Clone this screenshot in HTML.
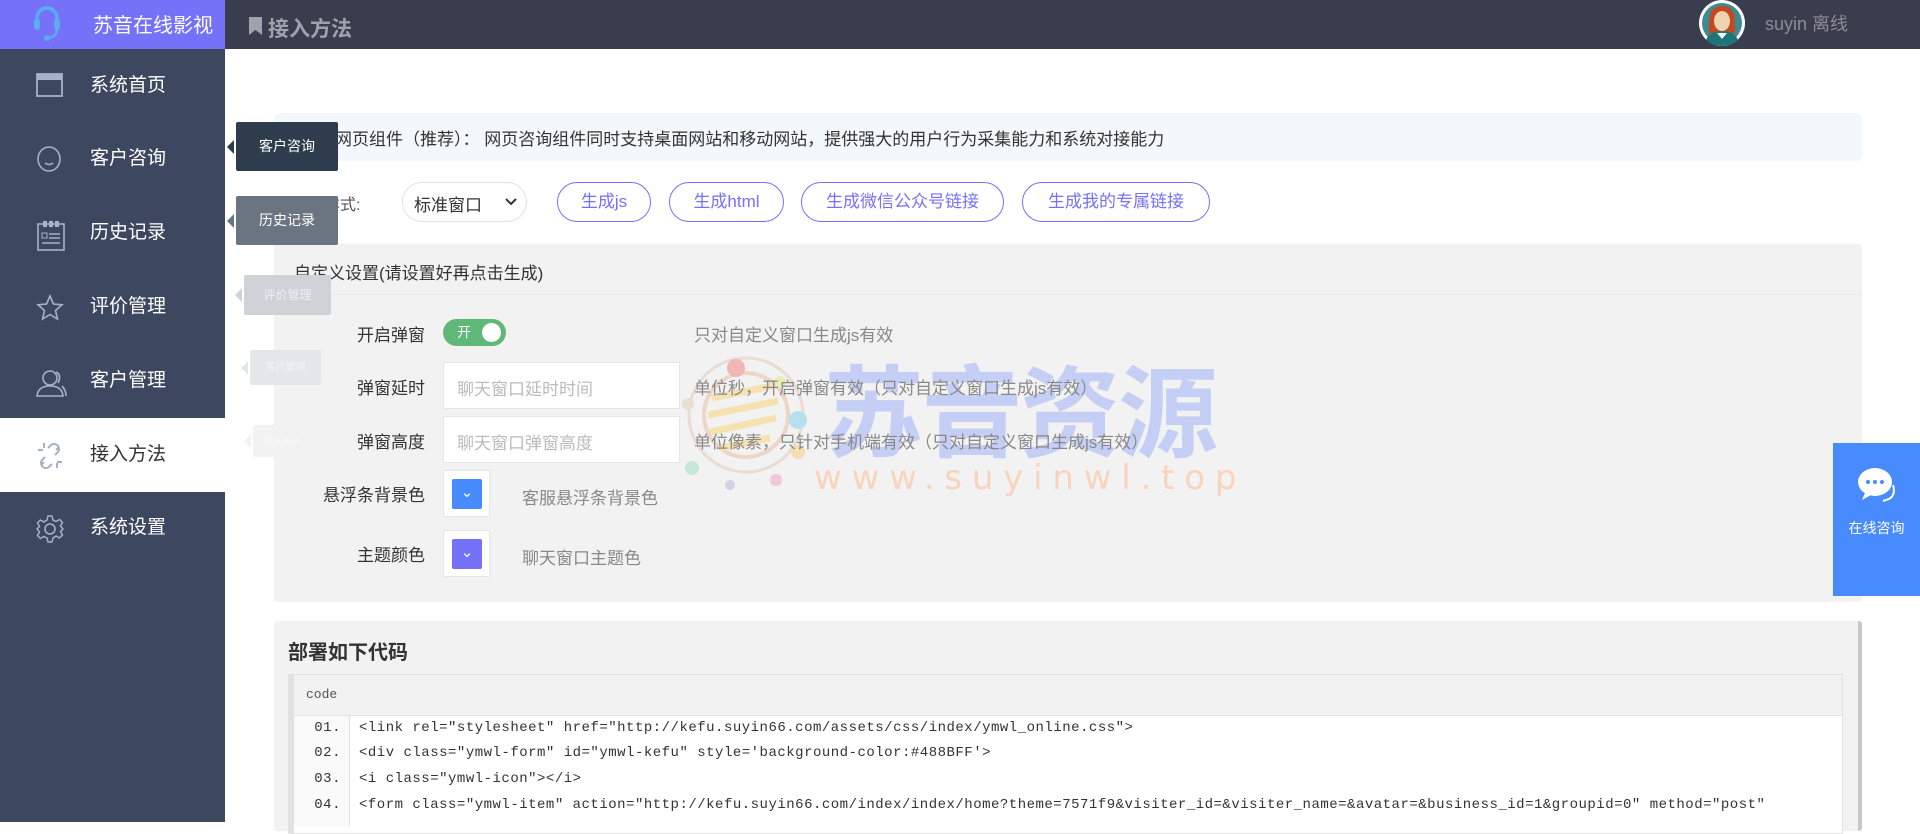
<!DOCTYPE html>
<html><head><meta charset="utf-8"><style>
*{margin:0;padding:0;box-sizing:border-box}
body{width:1920px;height:822px;overflow:hidden;background:#fff;font-family:"Liberation Sans","Noto Sans CJK SC",sans-serif;position:relative;color:#333}
.abs{position:absolute}
.top{left:0;top:0;width:1920px;height:49px;background:#393d4d}
.logo{left:0;top:0;width:225px;height:49px;background:#7571f9;color:#fff;font-size:20px}
.side{left:0;top:49px;width:225px;height:773px;background:#3d4760}
.mi{position:absolute;left:0;width:225px;height:74px;color:#fff;font-size:19px;line-height:74px;padding-left:90px}
.mi svg{position:absolute;left:36px;top:24px}
.mi.act{background:#fff;color:#333}
.tip{position:absolute;color:#fff;text-align:center;border-radius:2px}
.tip:before{content:"";position:absolute;left:-9px;top:50%;margin-top:-7px;border:7px solid transparent;border-right-color:inherit;border-left:0;width:0;height:0}
.lbl{position:absolute;font-size:17px;color:#333;text-align:right;width:200px}
.hint{position:absolute;font-size:17px;color:#888}
.inp{position:absolute;left:443px;width:237px;height:47px;background:#fff;border:1px solid #e6e6e6;font-size:17px;color:#bbb;padding:12px 13px}
.btn{position:absolute;top:182px;height:40px;border:1px solid #7571f9;border-radius:20px;color:#7571f9;font-size:17px;line-height:38px;text-align:center}
.cb{position:absolute;left:443px;width:47px;height:47px;border:1px solid #e6e6e6;background:#fff}
.cb div{position:absolute;left:8px;top:8px;width:30px;height:30px;border-radius:2px;color:#fff;text-align:center;line-height:28px;font-size:15px}
.code{font-family:"Liberation Mono",monospace;font-size:14px;letter-spacing:0.5px;color:#333}
.ln{position:absolute;left:0;width:62px;text-align:right;padding-right:9px}
</style></head><body>
<div class="abs top"></div>
<div class="abs logo">
<svg class="abs" style="left:33px;top:4px" width="28" height="38" viewBox="0 0 28 38"><path d="M4 19V14a10 10 0 0 1 20 0v5" fill="none" stroke="#5aaef0" stroke-width="3.5"/><rect x="1" y="15" width="6" height="11" rx="3" fill="#5aaef0"/><rect x="21" y="15" width="6" height="11" rx="3" fill="#5aaef0"/><path d="M24 25q0 8-9 9" fill="none" stroke="#5aaef0" stroke-width="2.5"/><circle cx="14" cy="34" r="3" fill="#5aaef0"/></svg>
<span class="abs" style="left:93px;top:9px">苏音在线影视</span></div>
<svg class="abs" style="left:249px;top:17px" width="13" height="18" viewBox="0 0 13 18"><path d="M0 0h13v18l-6.5-5L0 18z" fill="#9ea2ad"/></svg>
<div class="abs" style="left:268px;top:13px;color:#9ea2ad;font-size:21px;font-weight:bold">接入方法</div>
<svg class="abs" style="left:1697px;top:0" width="50" height="48" viewBox="0 0 50 48"><circle cx="25" cy="23" r="23" fill="#fff"/><circle cx="25" cy="23" r="20" fill="#3c8b94"/><path d="M12 23q0-17 13-17t13 17v10h-26z" fill="#c3491f"/><ellipse cx="25" cy="21" rx="8" ry="10" fill="#f2d3b0"/><path d="M9 40q4-9 16-9t16 9q-7 6-16 6t-16-6z" fill="#1f7478"/><path d="M20 33l5 6 5-6" fill="#fff"/></svg>
<div class="abs" style="left:1765px;top:10px;color:#8a8d96;font-size:18px">suyin 离线</div>

<div class="abs side"></div>
<div class="mi" style="top:49px"><svg width="27" height="26" viewBox="0 0 27 26"><rect x="1" y="1" width="25" height="22" fill="none" stroke="#a7b1c8" stroke-width="1.8"/><rect x="1" y="1" width="25" height="6" fill="#a7b1c8"/></svg>系统首页</div>
<div class="mi" style="top:122px"><svg width="27" height="30" viewBox="0 0 27 30"><ellipse cx="13" cy="13" rx="11" ry="12" fill="none" stroke="#a7b1c8" stroke-width="1.6"/><path d="M9 17q4 3 8 0" fill="none" stroke="#a7b1c8" stroke-width="1.5"/></svg>客户咨询</div>
<div class="mi" style="top:196px"><svg width="30" height="32" viewBox="0 0 30 32"><rect x="2" y="4" width="26" height="26" fill="none" stroke="#a7b1c8" stroke-width="1.6"/><rect x="7" y="1" width="4" height="6" fill="#a7b1c8"/><rect x="13" y="1" width="4" height="6" fill="#a7b1c8"/><rect x="19" y="1" width="4" height="6" fill="#a7b1c8"/><rect x="6" y="13" width="5" height="5" fill="none" stroke="#a7b1c8"/><path d="M13 14h11M13 18h11M6 23h18" stroke="#a7b1c8" stroke-width="1.6"/></svg>历史记录</div>
<div class="mi" style="top:270px"><svg width="28" height="28" viewBox="0 0 28 28"><path d="M14 2l3.5 8 8.5.8-6.5 5.7 2 8.5L14 20.5 6.5 25l2-8.5L2 10.8l8.5-.8z" fill="none" stroke="#a7b1c8" stroke-width="1.6"/></svg>评价管理</div>
<div class="mi" style="top:344px"><svg width="32" height="30" viewBox="0 0 32 30"><circle cx="14" cy="10" r="7" fill="none" stroke="#a7b1c8" stroke-width="1.6"/><path d="M1 28q1-10 13-10t13 10z" fill="none" stroke="#a7b1c8" stroke-width="1.6"/><path d="M20 4q6 3 2 11M26 18q4 4 4 10" fill="none" stroke="#a7b1c8" stroke-width="1.6"/></svg>客户管理</div>
<div class="mi act" style="top:418px"><svg width="28" height="28" viewBox="0 0 28 28"><path d="M12 6l3-3a5 5 0 0 1 7 7l-3 3M16 22l-3 3a5 5 0 0 1-7-7l3-3M2 8h5M8 1v5M21 26v-5M26 20h-5M20 8l3-3M5 23l3-3" fill="none" stroke="#a7b1c8" stroke-width="2"/></svg>接入方法</div>
<div class="mi" style="top:491px"><svg width="28" height="28" viewBox="0 0 28 28"><circle cx="14" cy="14" r="5" fill="none" stroke="#a7b1c8" stroke-width="1.6"/><path d="M12 1h4l1 4 3 1.5 3.5-2 3 3-2 3.5L26 13l1 1v0l-1 1-1.5 1.5 2 3.5-3 3-3.5-2L17 23l-1 4h-4l-1-4-3-1.5-3.5 2-3-3 2-3.5L2 15l-1-1 1-1 1.5-1.5-2-3.5 3-3 3.5 2L11 5z" fill="none" stroke="#a7b1c8" stroke-width="1.5"/></svg>系统设置</div>

<div class="abs" style="left:274px;top:113px;width:1588px;height:48px;background:#f3f8fd;border-radius:6px"></div>
<div class="abs" style="left:335px;top:125px;font-size:17px;color:#333">网页组件（推荐）： 网页咨询组件同时支持桌面网站和移动网站，提供强大的用户行为采集能力和系统对接能力</div>

<div class="abs" style="left:276px;top:191px;font-size:16px;color:#555">聊天框样式:</div>
<div class="abs" style="left:402px;top:182px;width:125px;height:40px;border:1px solid #e2e2e2;border-radius:20px;font-size:17px;padding:8px 11px;color:#333">标准窗口<svg class="abs" style="left:102px;top:15px" width="12" height="8" viewBox="0 0 12 8"><path d="M1 1l5 5 5-5" fill="none" stroke="#333" stroke-width="2"/></svg></div>
<div class="btn" style="left:557px;width:94px">生成js</div>
<div class="btn" style="left:669px;width:115px">生成html</div>
<div class="btn" style="left:801px;width:203px">生成微信公众号链接</div>
<div class="btn" style="left:1022px;width:188px">生成我的专属链接</div>

<div class="abs" style="left:274px;top:244px;width:1588px;height:358px;background:#f2f2f2;border-radius:3px"></div>
<div class="abs" style="left:274px;top:294px;width:1588px;height:1px;background:#e8e8e8"></div>
<div class="abs" style="left:294px;top:259px;font-size:17px;color:#333">自定义设置(请设置好再点击生成)</div>

<!-- watermark -->
<svg class="abs" style="left:680px;top:340px" width="140" height="150" viewBox="0 0 140 150"><circle cx="66" cy="75" r="57" fill="none" stroke="#e9dcd2" stroke-width="3"/><circle cx="66" cy="75" r="42" fill="none" stroke="#ecd6c6" stroke-width="4"/><path d="M32 58l60-12M28 75l70-14M30 92l66-14M40 108l50-10" stroke="#f6e2b0" stroke-width="7"/><circle cx="56" cy="28" r="9" fill="#f0b5b5"/><circle cx="100" cy="42" r="6" fill="#ebeeb4"/><circle cx="118" cy="80" r="9" fill="#b6e0ee"/><circle cx="118" cy="112" r="7" fill="#f2dfb0"/><circle cx="96" cy="140" r="6" fill="#f3c7d8"/><circle cx="50" cy="145" r="5" fill="#d6d0e2"/><circle cx="8" cy="64" r="6" fill="#eadfd4"/><circle cx="12" cy="128" r="7" fill="#c6e8d8"/></svg>
<div class="abs" style="left:824px;top:355px;font-size:100px;font-weight:bold;color:#c5cff5;letter-spacing:-2px;line-height:120px">苏音资源</div>
<div class="abs" style="left:814px;top:458px;font-size:34px;color:#f8d4bd;letter-spacing:9.8px;font-family:'DejaVu Sans',sans-serif">www.suyinwl.top</div>

<div class="lbl" style="left:225px;top:321px">开启弹窗</div>
<div class="abs" style="left:443px;top:319px;width:63px;height:27px;background:#5fb878;border-radius:14px;color:#fff;font-size:14px;line-height:27px;padding-left:14px">开<div class="abs" style="left:39px;top:4px;width:19px;height:19px;background:#fff;border-radius:50%"></div></div>
<div class="hint" style="left:694px;top:321px">只对自定义窗口生成js有效</div>

<div class="lbl" style="left:225px;top:374px">弹窗延时</div>
<div class="inp" style="top:362px">聊天窗口延时时间</div>
<div class="hint" style="left:694px;top:374px">单位秒，开启弹窗有效（只对自定义窗口生成js有效）</div>

<div class="lbl" style="left:225px;top:428px">弹窗高度</div>
<div class="inp" style="top:416px">聊天窗口弹窗高度</div>
<div class="hint" style="left:694px;top:428px">单位像素，只针对手机端有效（只对自定义窗口生成js有效）</div>

<div class="lbl" style="left:225px;top:481px">悬浮条背景色</div>
<div class="cb" style="top:470px"><div style="background:#488bff">⌄</div></div>
<div class="hint" style="left:522px;top:484px">客服悬浮条背景色</div>

<div class="lbl" style="left:225px;top:541px">主题颜色</div>
<div class="cb" style="top:530px"><div style="background:#7571f9">⌄</div></div>
<div class="hint" style="left:522px;top:544px">聊天窗口主题色</div>

<div class="abs" style="left:274px;top:621px;width:1588px;height:210px;background:#f2f2f2;border-right:4px solid #c8c8c8;border-radius:3px"></div>
<div class="abs" style="left:288px;top:636px;font-size:20px;font-weight:bold;color:#333">部署如下代码</div>
<div class="abs" style="left:288px;top:674px;width:1555px;height:160px;border:1px solid #e2e2e2;border-left:6px solid #e2e2e2;background:#fff"></div>
<div class="abs" style="left:294px;top:675px;width:1548px;height:41px;background:#f2f2f2;border-bottom:1px solid #e2e2e2"></div>
<div class="abs code" style="left:306px;top:687px;font-size:13px;letter-spacing:0;color:#555">code</div>
<div class="abs" style="left:294px;top:716px;width:56px;height:110px;background:#fafafa;border-right:1px solid #e2e2e2"></div>
<div class="abs code" style="left:288px;top:718px;width:1550px;height:104px;overflow:hidden">
<div style="position:absolute;top:0;height:25px;line-height:20px;width:1550px"><span class="ln">01.</span><span style="position:absolute;left:71px;white-space:nowrap">&lt;link rel="stylesheet" href="http://kefu.suyin66.com/assets/css/index/ymwl_online.css"&gt;</span></div>
<div style="position:absolute;top:25px;height:25px;line-height:20px;width:1550px"><span class="ln">02.</span><span style="position:absolute;left:71px;white-space:nowrap">&lt;div class="ymwl-form" id="ymwl-kefu" style='background-color:#488BFF'&gt;</span></div>
<div style="position:absolute;top:51px;height:25px;line-height:20px;width:1550px"><span class="ln">03.</span><span style="position:absolute;left:71px;white-space:nowrap">&lt;i class="ymwl-icon"&gt;&lt;/i&gt;</span></div>
<div style="position:absolute;top:77px;height:25px;line-height:20px;width:1550px"><span class="ln">04.</span><span style="position:absolute;left:71px;white-space:nowrap">&lt;form class="ymwl-item" action="http://kefu.suyin66.com/index/index/home?theme=7571f9&amp;visiter_id=&amp;visiter_name=&amp;avatar=&amp;business_id=1&amp;groupid=0" method="post"</span></div>
</div>

<div class="tip" style="left:236px;top:122px;width:102px;height:49px;background:#2e3c4e;border-color:#2e3c4e;font-size:14px;line-height:49px">客户咨询</div>
<div class="tip" style="left:236px;top:196px;width:102px;height:49px;background:#6b7581;border-color:#6b7581;font-size:14px;line-height:49px">历史记录</div>
<div class="tip" style="left:244px;top:275px;width:87px;height:40px;background:#cfd2d6;border-color:#cfd2d6;font-size:12px;line-height:40px;color:#eef0f3">评价管理</div>
<div class="tip" style="left:250px;top:350px;width:71px;height:35px;background:#e5e6e8;border-color:#e5e6e8;font-size:10px;line-height:35px;color:#f4f4f5">客户管理</div>
<div class="tip" style="left:253px;top:425px;width:58px;height:32px;background:#f2f2f3;border-color:#f2f2f3;font-size:9px;line-height:32px;color:#f8f8f8">接入方法</div>

<div class="abs" style="left:1833px;top:443px;width:87px;height:153px;background:#488bff;color:#fff;font-size:14px;text-align:center">
<svg style="margin-top:22px" width="44" height="40" viewBox="0 0 44 40"><ellipse cx="20" cy="17" rx="17" ry="14" fill="#fff"/><path d="M10 28l-3 7 9-5z" fill="#fff"/><circle cx="13" cy="17" r="2" fill="#488bff"/><circle cx="20" cy="17" r="2" fill="#488bff"/><circle cx="27" cy="17" r="2" fill="#488bff"/><path d="M38 20q3 10-4 14l-6 2" fill="none" stroke="#fff" stroke-width="2"/></svg>
<div style="margin-top:10px">在线咨询</div></div>
</body></html>
